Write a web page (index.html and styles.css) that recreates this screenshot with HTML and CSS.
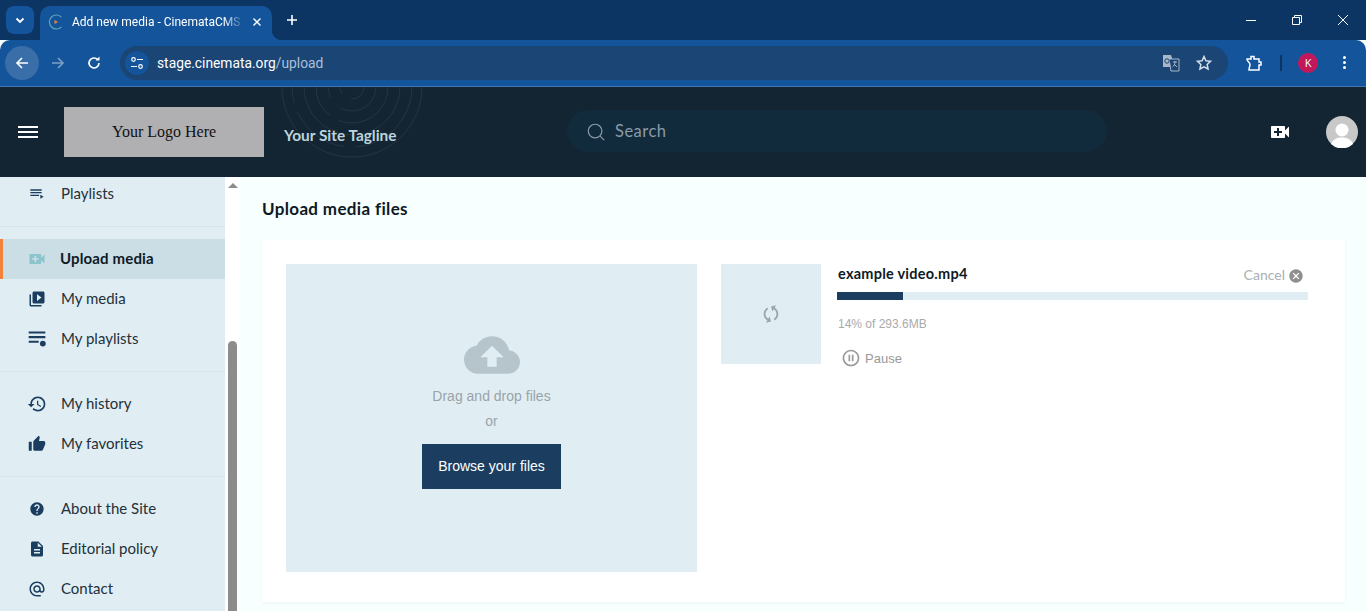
FILE: index.html
```html
<!DOCTYPE html>
<html lang="en">
<head>
    <meta charset="UTF-8">
    <meta name="viewport" content="width=device-width, initial-scale=1.0">
    <title>Add new media - CinemataCMS</title>
    <link rel="stylesheet" href="styles.css">
</head>
<body>
<!-- browser frame -->
<div class="tabstrip">
    <div class="tab-search">
        <svg width="12" height="12" viewBox="0 0 12 12"><path d="M2.5 4.5 6 8l3.5-3.5" fill="none" stroke="#fff" stroke-width="1.8"/></svg>
    </div>
    <div class="tab">
        <svg class="favicon" width="16" height="16" viewBox="0 0 16 16">
            <path d="M13.500 3.200A7 7 0 1 0 13.500 12.800" fill="none" stroke="#5fa3b5" stroke-width="1.200"/>
            <path d="M6.500 6 10 8 6.500 10z" fill="#f4823a"/>
        </svg>
        <span class="tab-title">Add new media - CinemataCMS</span>
        <svg class="tab-close" width="10" height="10" viewBox="0 0 10 10"><path d="M1.500 1.500l7 7m0-7l-7 7" stroke="#fff" stroke-width="1.400"/></svg>
    </div>
    <svg class="tab-new" width="12" height="12" viewBox="0 0 12 12"><path d="M6 1v10M1 6h10" stroke="#fff" stroke-width="1.600"/></svg>
    <div class="win-controls">
        <svg width="12" height="12" viewBox="0 0 12 12"><path d="M1 6.500h10" stroke="#fff"/></svg>
        <svg width="12" height="12" viewBox="0 0 12 12"><path d="M1.500 3.500h7v7h-7zM3.500 3.500v-2h7v7h-2" fill="none" stroke="#fff"/></svg>
        <svg width="12" height="12" viewBox="0 0 12 12"><path d="M1 1l10 10m0-10L1 11" stroke="#fff"/></svg>
    </div>
</div>
<div class="toolbar">
    <div class="nav-btn nav-back">
        <svg width="16" height="16" viewBox="0 0 16 16"><path d="M14 8H3M8 3 3 8l5 5" fill="none" stroke="#fff" stroke-width="1.600"/></svg>
    </div>
    <div class="nav-btn">
        <svg width="16" height="16" viewBox="0 0 16 16"><path d="M2 8h11M8 3l5 5-5 5" fill="none" stroke="#7d9fc6" stroke-width="1.600"/></svg>
    </div>
    <div class="nav-btn">
        <svg width="16" height="16" viewBox="0 0 16 16"><path d="M13 8a5 5 0 1 1-1.500-3.600" fill="none" stroke="#fff" stroke-width="1.600"/><path d="M13.500 1.500v4h-4z" fill="#fff"/></svg>
    </div>
    <div class="omnibox">
        <div class="site-info">
            <svg width="14" height="14" viewBox="0 0 14 14" fill="none" stroke="#fff" stroke-width="1.200"><circle cx="3.500" cy="3.500" r="1.800"/><path d="M7 3.500h6M1 10.500h6"/><circle cx="10.500" cy="10.500" r="1.800"/></svg>
        </div>
        <span class="url">stage.cinemata.org<span class="url-path">/upload</span></span>
        <svg class="omni-translate" width="18" height="18" viewBox="0 0 18 18">
            <path d="M1 1h8l1 3v9H1z" fill="#a9b8c9"/>
            <path d="M7 5h10v12H9z" fill="#1a4575" stroke="#a9b8c9"/>
            <path d="M11 8h4m-2-1v1c0 2-1 4-2.500 5M12 10l3 3" fill="none" stroke="#a9b8c9"/>
            <circle cx="5" cy="7" r="2.200" fill="none" stroke="#1a4575"/>
        </svg>
        <svg class="omni-star" width="18" height="18" viewBox="0 0 24 24"><path d="M12 3.500l2.600 5.600 6.100.7-4.500 4.200 1.200 6L12 17l-5.400 3 1.200-6-4.500-4.200 6.100-.7z" fill="none" stroke="#d5dfeb" stroke-width="2"/></svg>
    </div>
    <svg class="ext-icon" width="18" height="18" viewBox="0 0 18 18"><path d="M2 5h4V2.500h3V5h5v3h2v3h-2v5H4c0-3 1-3 1-5.500S2 8 2 5z" fill="none" stroke="#fff" stroke-width="1.500"/></svg>
    <div class="toolbar-sep"></div>
    <div class="profile">K</div>
    <div class="menu-dots"><i></i><i></i><i></i></div>
</div>

<!-- site header -->
<header class="site-header">
    <svg class="rings" width="160" height="90" viewBox="0 0 160 90" fill="none" stroke="#243645">
        <circle cx="80" cy="0" r="12" stroke-dasharray="20 10"/>
        <circle cx="80" cy="0" r="24" stroke-dasharray="50 14"/>
        <circle cx="80" cy="0" r="36" stroke-dasharray="70 10"/>
        <circle cx="80" cy="0" r="48" stroke-dasharray="60 12 90 8"/>
        <circle cx="80" cy="0" r="60" stroke-dasharray="90 12 60 10"/>
        <circle cx="80" cy="0" r="70"/>
    </svg>
    <div class="hamburger"><i></i><i></i><i></i></div>
    <div class="logo-box">Your Logo Here</div>
    <div class="tagline">Your Site Tagline</div>
    <div class="search">
        <svg width="20" height="20" viewBox="0 0 22 22" fill="none" stroke="#8a9ba8" stroke-width="1.300"><circle cx="10" cy="10" r="7.500"/><path d="M15.500 15.500 20 20"/></svg>
        <span>Search</span>
    </div>
    <svg class="upload-btn" width="24" height="24" viewBox="0 0 24 24"><path fill="#fff" d="M17 10.500V7c0-.55-.45-1-1-1H4c-.55 0-1 .45-1 1v10c0 .55.45 1 1 1h12c.55 0 1-.45 1-1v-3.500l4 4v-11l-4 4zM14 13h-3v3H9v-3H6v-2h3V8h2v3h3v2z"/></svg>
    <div class="avatar">
        <svg width="32" height="32" viewBox="0 0 32 32"><circle cx="16" cy="16" r="16" fill="#c8c8c8"/><circle cx="16" cy="14" r="6.500" fill="#fff"/><path d="M5 28c2-5 6-6.500 11-6.500S25 23 27 28a16 16 0 0 1-22 0z" fill="#fff"/></svg>
    </div>
</header>

<div class="main">
    <nav class="sidebar">
        <ul class="side-list side-list-first">
            <li class="side-item">
                <svg width="16" height="16" viewBox="0 0 24 24"><path d="M19 9H2v2h17V9zm0-4H2v2h17V5zM2 15h13v-2H2v2zm15-2v6l5-3-5-3z"/></svg>
                <span>Playlists</span>
            </li>
        </ul>
        <ul class="side-list">
            <li class="side-item active">
                <svg width="20" height="20" viewBox="0 0 24 24"><path fill="#8cc4cc" d="M17 10.500V7c0-.55-.45-1-1-1H4c-.55 0-1 .45-1 1v10c0 .55.45 1 1 1h12c.55 0 1-.45 1-1v-3.500l4 4v-11l-4 4zM14 13h-3v3H9v-3H6v-2h3V8h2v3h3v2z"/></svg>
                <span>Upload media</span>
            </li>
            <li class="side-item">
                <svg width="18" height="18" viewBox="0 0 24 24"><path d="M4 6H2v14c0 1.100.9 2 2 2h14v-2H4V6zm16-4H8c-1.100 0-2 .9-2 2v12c0 1.100.9 2 2 2h12c1.100 0 2-.9 2-2V4c0-1.100-.9-2-2-2zm-8 12.500v-9l6 4.500-6 4.500z"/></svg>
                <span>My media</span>
            </li>
            <li class="side-item">
                <svg width="20" height="20" viewBox="0 0 24 24"><path d="M2 3h20v2.500H2zM2 8.500h20V11H2zM2 14h12v2.500H2z"/><circle cx="19" cy="17.500" r="3.500"/></svg>
                <span>My playlists</span>
            </li>
        </ul>
        <ul class="side-list">
            <li class="side-item">
                <svg width="20" height="20" viewBox="0 0 24 24"><path d="M13 3c-4.970 0-9 4.030-9 9H1l3.890 3.890.07.14L9 12H6c0-3.870 3.130-7 7-7s7 3.130 7 7-3.130 7-7 7c-1.930 0-3.680-.79-4.940-2.060l-1.420 1.420C8.270 19.990 10.510 21 13 21c4.970 0 9-4.030 9-9s-4.030-9-9-9zm-1 5v5l4.280 2.540.72-1.210-3.500-2.080V8H12z"/></svg>
                <span>My history</span>
            </li>
            <li class="side-item">
                <svg width="18" height="18" viewBox="0 0 24 24"><path d="M1 21h4V9H1v12zm22-11c0-1.100-.9-2-2-2h-6.310l.95-4.570.03-.32c0-.41-.17-.79-.44-1.060L14.170 1 7.590 7.590C7.220 7.950 7 8.450 7 9v10c0 1.100.9 2 2 2h9c.83 0 1.540-.5 1.840-1.220l3.020-7.050c.09-.23.14-.47.14-.73v-2z"/></svg>
                <span>My favorites</span>
            </li>
        </ul>
        <ul class="side-list side-list-last">
            <li class="side-item">
                <svg width="16" height="16" viewBox="0 0 24 24"><path d="M12 2C6.480 2 2 6.480 2 12s4.480 10 10 10 10-4.480 10-10S17.520 2 12 2zm1 17h-2v-2h2v2zm2.070-7.750l-.9.920C13.450 12.900 13 13.500 13 15h-2v-.5c0-1.100.45-2.100 1.170-2.830l1.240-1.260c.37-.36.59-.86.59-1.410 0-1.100-.9-2-2-2s-2 .9-2 2H8c0-2.210 1.790-4 4-4s4 1.790 4 4c0 .88-.36 1.680-.93 2.250z"/></svg>
                <span>About the Site</span>
            </li>
            <li class="side-item">
                <svg width="18" height="18" viewBox="0 0 24 24"><path d="M14 2H6c-1.100 0-1.990.9-1.990 2L4 20c0 1.100.89 2 1.990 2H18c1.100 0 2-.9 2-2V8l-6-6zm2 16H8v-2h8v2zm0-4H8v-2h8v2zm-3-5V3.500L18.500 9H13z"/></svg>
                <span>Editorial policy</span>
            </li>
            <li class="side-item">
                <svg width="18" height="18" viewBox="0 0 24 24"><path d="M12 2C6.480 2 2 6.480 2 12s4.480 10 10 10h5v-2h-5c-4.340 0-8-3.660-8-8s3.660-8 8-8 8 3.660 8 8v1.430c0 .79-.71 1.570-1.500 1.570s-1.500-.78-1.500-1.570V12c0-2.760-2.240-5-5-5s-5 2.240-5 5 2.240 5 5 5c1.380 0 2.640-.56 3.540-1.470.65.89 1.770 1.470 2.960 1.470 1.970 0 3.500-1.600 3.500-3.570V12c0-5.520-4.480-10-10-10zm0 13c-1.660 0-3-1.340-3-3s1.340-3 3-3 3 1.340 3 3-1.340 3-3 3z"/></svg>
                <span>Contact</span>
            </li>
        </ul>
    </nav>
    <div class="side-scroll">
        <div class="scroll-arrow"></div>
        <div class="scroll-thumb"></div>
    </div>

    <section class="content">
        <h1 class="page-title">Upload media files</h1>
        <div class="upload-card">
            <div class="dropzone">
                <svg class="cloud" width="56" height="56" viewBox="0 0 24 24"><path fill="#b6c5cc" d="M19.350 10.040C18.670 6.590 15.640 4 12 4 9.110 4 6.600 5.640 5.350 8.040 2.340 8.360 0 10.910 0 14c0 3.310 2.690 6 6 6h13c2.760 0 5-2.240 5-5 0-2.640-2.050-4.780-4.650-4.960zM14 13v4h-4v-4H7l5-5 5 5h-3z"/></svg>
                <div class="drop-text">Drag and drop files</div>
                <div class="drop-or">or</div>
                <div class="browse-btn">Browse your files</div>
            </div>
            <div class="file-row">
                <div class="file-thumb">
                    <svg class="sync-icon" width="22" height="22" viewBox="0 0 24 24"><path fill="#9aa6ac" d="M12 4V1L8 5l4 4V6c3.310 0 6 2.690 6 6 0 1.010-.25 1.970-.7 2.800l1.460 1.460C19.540 15.030 20 13.570 20 12c0-4.420-3.580-8-8-8zm0 14c-3.310 0-6-2.690-6-6 0-1.010.25-1.970.7-2.800L5.240 7.740C4.460 8.970 4 10.430 4 12c0 4.420 3.580 8 8 8v3l4-4-4-4v3z"/></svg>
                </div>
                <div class="file-info">
                    <div class="file-head">
                        <span class="file-name">example video.mp4</span>
                        <span class="file-cancel">Cancel
                            <svg width="16" height="16" viewBox="0 0 24 24"><path fill="#8f8f8f" d="M12 2C6.470 2 2 6.470 2 12s4.470 10 10 10 10-4.470 10-10S17.530 2 12 2zm5 13.590L15.590 17 12 13.410 8.410 17 7 15.590 10.590 12 7 8.410 8.410 7 12 10.590 15.590 7 17 8.410 13.410 12 17 15.590z"/></svg>
                        </span>
                    </div>
                    <div class="progress"><div class="progress-fill" style="width: 14%"></div></div>
                    <div class="file-size">14% of 293.6MB</div>
                    <div class="file-pause">
                        <svg width="20" height="20" viewBox="0 0 24 24"><path fill="#999" d="M9 16h2V8H9v8zm3-14C6.480 2 2 6.480 2 12s4.480 10 10 10 10-4.480 10-10S17.520 2 12 2zm0 18c-4.410 0-8-3.590-8-8s3.590-8 8-8 8 3.590 8 8-3.590 8-8 8zm1-4h2V8h-2v8z"/></svg>
                        <span>Pause</span>
                    </div>
                </div>
            </div>
        </div>
    </section>
</div>
</body>
</html>
```

FILE: styles.css
```css
* {
    box-sizing: border-box;
}

html, body {
    margin: 0;
    height: 611px;
    overflow: hidden;
}

body {
    display: flex;
    flex-direction: column;
    font-family: "Lato", "Noto Sans", sans-serif;
    background-color: #f8ffff;
}

/* browser frame */
.tabstrip {
    height: 40px;
    display: flex;
    align-items: flex-end;
    background-color: #0c3563;
    flex-shrink: 0;
}

.tab-search {
    width: 28px;
    height: 28px;
    margin: 0 6px 6px 6px;
    border-radius: 8px;
    background-color: #14549b;
    display: flex;
    align-items: center;
    justify-content: center;
}

.tab {
    position: relative;
    width: 232px;
    height: 34px;
    padding: 0 10px 2px 8px;
    background-color: #14549b;
    border-radius: 10px 10px 0 0;
    display: flex;
    align-items: center;
    color: #fff;
    font-family: Roboto, sans-serif;
    font-size: 12px;
}

.tab::after {
    content: "";
    position: absolute;
    right: -10px;
    bottom: 0;
    width: 10px;
    height: 10px;
    background: radial-gradient(circle at 100% 0, transparent 10px, #14549b 10.500px);
}

.favicon {
    flex-shrink: 0;
    margin-right: 8px;
}

.tab-title {
    flex: 1;
    white-space: nowrap;
    overflow: hidden;
    -webkit-mask-image: linear-gradient(to right, #000 88%, transparent 100%);
    mask-image: linear-gradient(to right, #000 88%, transparent 100%);
}

.tab-close {
    margin-left: 8px;
    flex-shrink: 0;
}

.tab-new {
    margin: 0 0 14px 14px;
}

.win-controls {
    margin-left: auto;
    height: 40px;
    display: flex;
    align-items: center;
    gap: 34px;
    padding-right: 17px;
}

.toolbar {
    height: 47px;
    flex-shrink: 0;
    display: flex;
    align-items: center;
    padding: 0 14px 1px 5px;
    background-color: #14549b;
    border-bottom: 1px solid #3f76b5;
    border-radius: 10px 10px 0 0;
}

.nav-btn {
    width: 34px;
    height: 34px;
    margin-right: 2px;
    border-radius: 50%;
    display: flex;
    align-items: center;
    justify-content: center;
}

.nav-back {
    background-color: #3a6ea8;
}

.omnibox {
    width: 1108px;
    height: 34px;
    margin-left: 7px;
    padding: 0 15px 0 5px;
    border-radius: 17px;
    background-color: #1a4575;
    display: flex;
    align-items: center;
    color: #fff;
    font-family: Roboto, sans-serif;
    font-size: 13.800px;
}

.site-info {
    width: 24px;
    height: 24px;
    border-radius: 50%;
    background-color: #14549b;
    display: flex;
    align-items: center;
    justify-content: center;
    margin-right: 8px;
}

.url {
    flex: 1;
}

.url-path {
    color: #a9c0da;
}

.omni-translate {
    margin-right: 15px;
}

.ext-icon {
    margin-left: 17px;
}

.toolbar-sep {
    width: 2px;
    height: 16px;
    margin: 0 16px 0 17px;
    background-color: #0c3563;
}

.profile {
    width: 20px;
    height: 20px;
    border-radius: 50%;
    background-color: #c2185b;
    color: #fff;
    font-size: 11px;
    font-family: "Open Sans", sans-serif;
    display: flex;
    align-items: center;
    justify-content: center;
}

.menu-dots {
    margin-left: 25px;
    display: flex;
    flex-direction: column;
    gap: 2px;
}

.menu-dots i {
    width: 3px;
    height: 3px;
    border-radius: 50%;
    background-color: #fff;
}

/* site header */
.site-header {
    position: relative;
    height: 90px;
    flex-shrink: 0;
    display: flex;
    align-items: center;
    padding-left: 18px;
    background-color: #132433;
    overflow: hidden;
}

.rings {
    position: absolute;
    left: 272px;
    top: 0;
}

.hamburger {
    width: 20px;
    margin-right: 26px;
    margin-bottom: 1px;
    display: flex;
    flex-direction: column;
    gap: 3px;
}

.hamburger i {
    height: 2px;
    background-color: #fff;
}

.logo-box {
    width: 200px;
    height: 50px;
    background-color: #b0b0b3;
    display: flex;
    align-items: center;
    justify-content: center;
    color: #111;
    font-family: "Liberation Serif", serif;
    font-size: 16px;
}

.tagline {
    position: relative;
    width: 303px;
    margin-top: 6px;
    padding-left: 20px;
    color: #bcd5dc;
    font-size: 15.400px;
    font-weight: 700;
}

.search {
    position: relative;
    width: 540px;
    height: 42px;
    margin-bottom: 3px;
    padding-left: 19px;
    border-radius: 21px;
    background-color: #112b3c;
    display: flex;
    align-items: center;
    gap: 9px;
    color: #8a9ba8;
    font-size: 16.500px;
    letter-spacing: 0.500px;
}

.search svg {
    margin-top: 3px;
}

.upload-btn {
    margin-left: 161px;
}

.avatar {
    width: 32px;
    height: 32px;
    margin-left: 34px;
}

/* main layout */
.main {
    flex: 1;
    min-height: 0;
    display: flex;
}

.sidebar {
    width: 225px;
    flex-shrink: 0;
    background-color: #e0eef4;
    overflow: hidden;
    color: #24303a;
    font-size: 15px;
}

.side-list {
    list-style: none;
    margin: 0;
    padding: 12px 0;
    border-bottom: 1px solid #d6e5ec;
}

.side-list-first {
    margin-top: -15px;
}

.side-list-last {
    border-bottom: none;
}

.side-item {
    height: 40px;
    display: flex;
    align-items: center;
    padding-left: 3px;
}

.side-item svg {
    fill: #1b3e60;
    margin-left: 34px;
    margin-right: auto;
    transform: translateX(-50%);
}

.side-item span {
    width: 164px;
    padding-bottom: 2px;
}

.side-item.active {
    background-color: #cbdde5;
    border-left: 3px solid #f4823a;
    padding-left: 0;
    color: #0e1a24;
    font-weight: 700;
}

.side-item.active span {
    width: 165px;
    letter-spacing: 0.150px;
}

.side-scroll {
    width: 15px;
    flex-shrink: 0;
    padding-left: 3px;
    background-color: #fff;
}

.scroll-arrow {
    width: 0;
    margin: 6px 0 0 0;
    border-left: 5px solid transparent;
    border-right: 5px solid transparent;
    border-bottom: 5px solid #8c8c8c;
}

.scroll-thumb {
    width: 9px;
    height: 300px;
    margin-top: 153px;
    background-color: #8c8c8c;
    border-radius: 5px 5px 0 0;
}

/* upload area */
.content {
    flex: 1;
    padding: 0 21px 0 22px;
}

.page-title {
    margin: 0;
    height: 63px;
    display: flex;
    align-items: center;
    color: #0e1a24;
    font-size: 17px;
    font-weight: 700;
    letter-spacing: 0.350px;
}

.upload-card {
    height: 362px;
    padding: 24px;
    display: flex;
    gap: 24px;
    background-color: #fff;
    box-shadow: 0 1px 3px rgba(0, 0, 0, 0.05);
}

.dropzone {
    width: 411px;
    height: 308px;
    flex-shrink: 0;
    padding-top: 63px;
    background-color: #e0eef4;
    display: flex;
    flex-direction: column;
    align-items: center;
    font-family: "Liberation Sans", Arial, sans-serif;
    font-size: 14px;
    color: #9aa3a8;
}

.drop-text {
    margin-top: 5px;
}

.drop-or {
    margin-top: 9px;
}

.browse-btn {
    width: 139px;
    height: 45px;
    margin-top: 15px;
    padding-bottom: 2px;
    background-color: #1b3e60;
    color: #fff;
    display: flex;
    align-items: center;
    justify-content: center;
}

.file-row {
    flex: 1;
    display: flex;
    gap: 16px;
}

.file-thumb {
    width: 100px;
    height: 100px;
    flex-shrink: 0;
    background-color: #e0eef4;
    display: flex;
    align-items: center;
    justify-content: center;
}

.sync-icon {
    transform: rotate(30deg);
}

.file-info {
    width: 471px;
}

.file-head {
    height: 28px;
    display: flex;
    align-items: center;
    justify-content: space-between;
}

.file-name {
    margin-bottom: 10px;
    padding-left: 1px;
    color: #0e1a24;
    font-size: 14.500px;
    font-weight: 700;
    letter-spacing: 0.250px;
}

.file-cancel {
    display: flex;
    align-items: center;
    gap: 3px;
    margin-right: 4px;
    margin-bottom: 8px;
    color: #aab0b4;
    font-size: 14px;
}

.file-cancel svg {
    margin-top: 3px;
}

.progress {
    height: 8px;
    background-color: #e0eef4;
}

.progress-fill {
    height: 100%;
    background-color: #1b3e60;
}

.file-size {
    margin-top: 17px;
    padding-left: 1px;
    color: #aaa;
    font-family: "Liberation Sans", Arial, sans-serif;
    font-size: 12px;
}

.file-pause {
    margin-top: 17px;
    padding-left: 4px;
    display: flex;
    align-items: center;
    gap: 4px;
    color: #999;
    font-family: "Liberation Sans", Arial, sans-serif;
    font-size: 13px;
}
```
